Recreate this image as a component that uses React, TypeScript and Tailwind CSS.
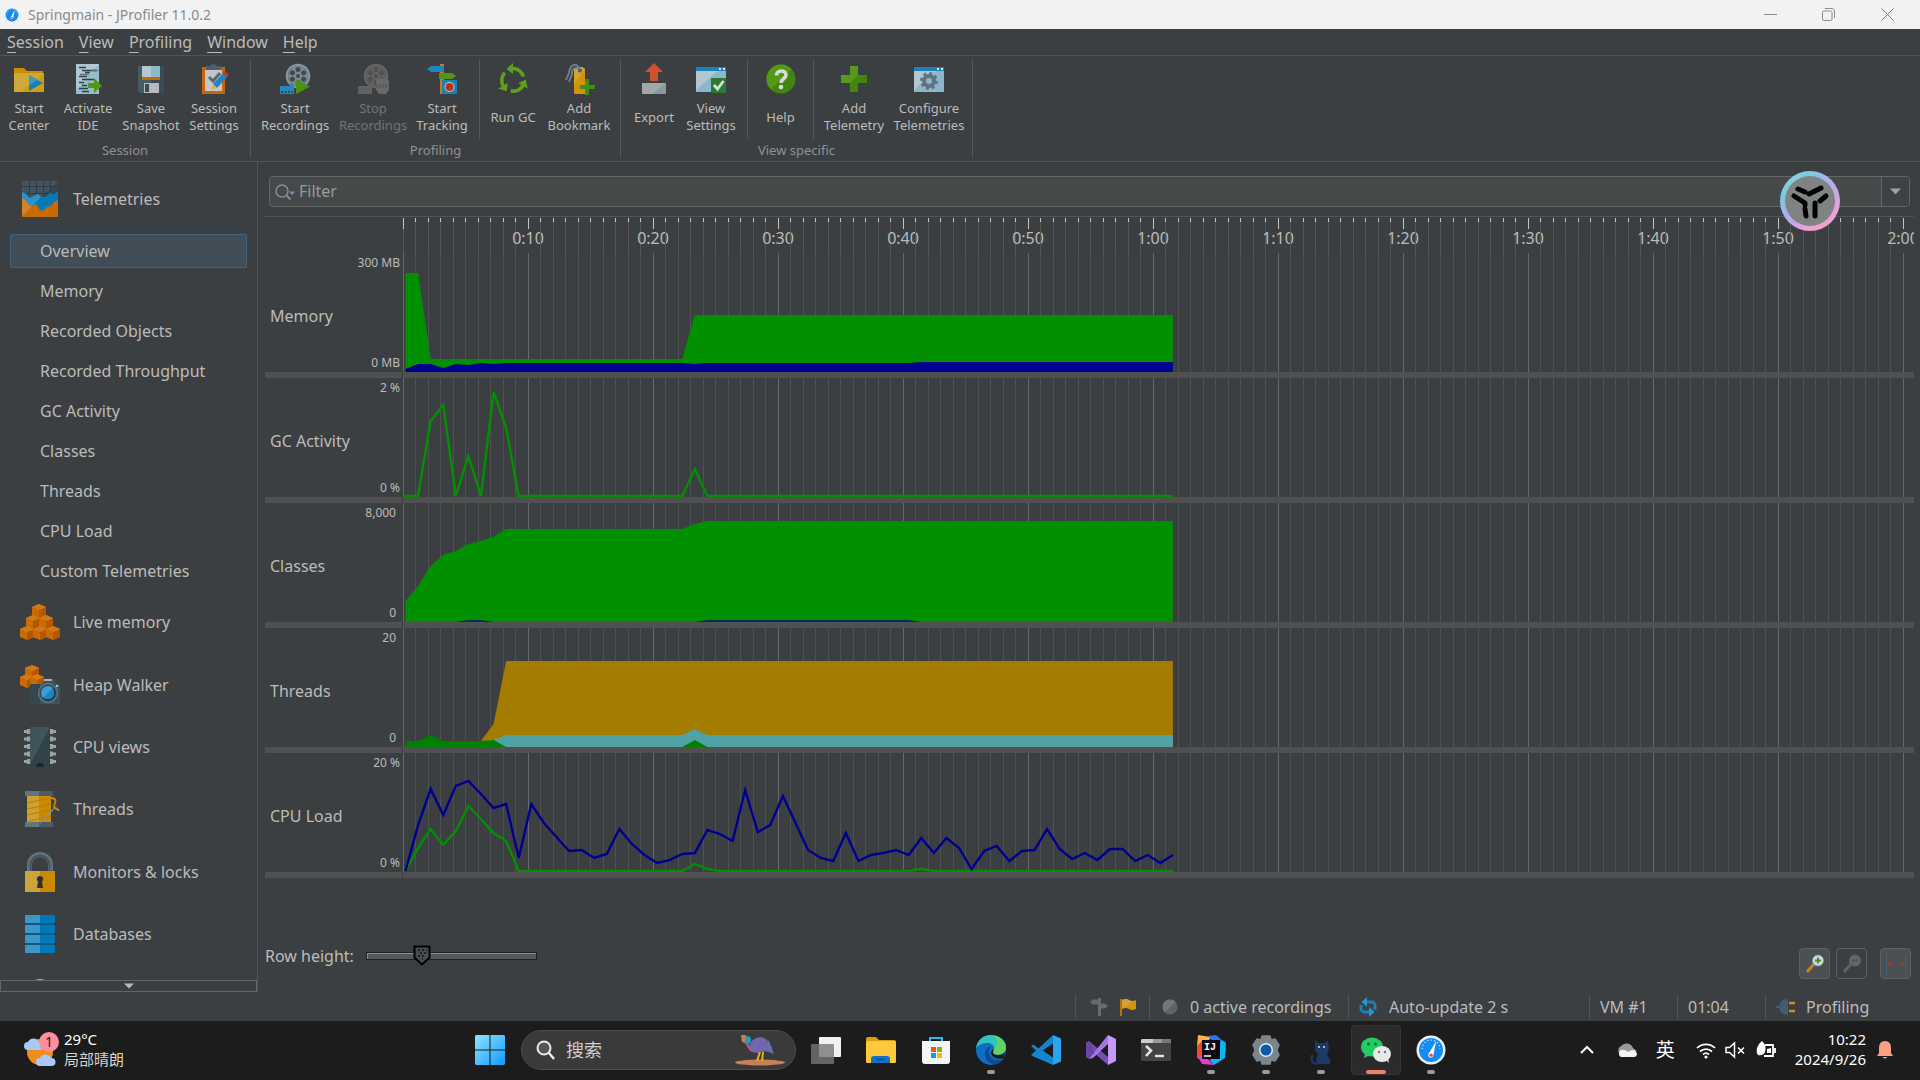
import React, { useState } from 'react';

type Point = [number, number];

const STEP = 12.58;
const BASE = 119;
const LAST = 61;

const px = (k: number) => 2.5 + k * STEP;
const line = (points: Point[]) => points.map(([k, y]) => `${px(k)},${y}`).join(' ');
const area = (points: Point[]) => {
  const first = points[0][0];
  const last = points[points.length - 1][0];
  return `${px(first)},${BASE} ${line(points)} ${px(last)},${BASE}`;
};

const memoryTotal: Point[] = [[0, 20], [1, 20], [2, 106], [22, 106], [23, 62], [LAST, 62]];
const memoryUsed: Point[] = [
  [0, 116], [1, 111], [2, 111], [3, 115], [4, 111], [5, 112], [6, 110], [7, 111], [8, 110],
  [22, 110], [23, 111], [24, 110], [40, 110], [41, 109], [LAST, 109],
];
const gcActivity: Point[] = [
  [0, 118], [1, 118], [2, 43], [3, 27], [4, 118], [5, 78], [6, 118], [7, 14], [8, 50], [9, 118],
  [22, 118], [23, 91], [24, 118], [LAST, 118],
];
const classesTotal: Point[] = [
  [0, 98], [1, 83], [2, 63], [3, 52], [4, 48], [5, 41], [6, 38], [7, 34], [8, 26], [22, 26],
  [23, 21], [24, 18], [LAST, 18],
];
const classesCpu: Point[] = [
  [0, 119], [4, 119], [5, 117], [6, 117], [7, 119], [23, 119], [24, 117], [40, 117], [41, 119], [LAST, 119],
];
const threadsWaiting: Point[] = [[6, 113], [7, 96], [8, 33], [LAST, 33]];
const threadsNet: Point[] = [[7, 112], [8, 107], [22, 107], [23, 101], [24, 107], [LAST, 107]];
const threadsRunnable: Point[] = [
  [0, 113], [1, 113], [2, 107], [3, 113], [6, 113], [7, 112], [8, 119], [22, 119], [23, 112], [24, 119],
];
const cpuProcess: Point[] = [
  118, 72, 36, 62, 33, 28, 41, 55, 51, 105, 51, 70, 84, 98, 97, 105, 101, 76, 91, 102, 110, 107, 101,
  100, 77, 81, 88, 37, 79, 72, 43, 70, 97, 105, 108, 80, 108, 102, 100, 97, 102, 85, 100, 85, 95, 116,
  98, 93, 108, 98, 97, 76, 96, 106, 100, 107, 96, 96, 108, 102, 110, 102,
].map((y, k) => [k, y]);
const cpuSystem: Point[] = [
  [0, 118], [1, 95], [2, 76], [3, 92], [4, 78], [5, 53], [6, 66], [7, 80], [8, 88], [9, 118],
  [22, 118], [23, 111], [24, 116], [25, 118], [40, 118], [41, 116], [42, 118], [LAST, 118],
];

const rows = [
  {
    name: 'Memory', top: '300 MB', bottom: '0 MB', pad: 'pr-0.5',
    plot: (
      <>
        <polygon points={area(memoryTotal)} fill="#009000" />
        <polygon points={area(memoryUsed)} fill="#000090" />
      </>
    ),
  },
  {
    name: 'GC Activity', top: '2 %', bottom: '0 %', pad: 'pr-0.5',
    plot: <polyline points={`0,118 ${line(gcActivity)}`} fill="none" stroke="#009000" strokeWidth="2.400" />,
  },
  {
    name: 'Classes', top: '8,000', bottom: '0', pad: 'pr-1.5',
    plot: (
      <>
        <polygon points={area(classesTotal)} fill="#009000" />
        <polygon points={area(classesCpu)} fill="#003058" />
      </>
    ),
  },
  {
    name: 'Threads', top: '20', bottom: '0', pad: 'pr-1.5',
    plot: (
      <>
        <polygon points={area(threadsWaiting)} fill="#a37c00" />
        <polygon points={area(threadsNet)} fill="#51a2a4" />
        <polygon points={area(threadsRunnable)} fill="#008000" />
      </>
    ),
  },
  {
    name: 'CPU Load', top: '20 %', bottom: '0 %', pad: 'pr-0.5',
    plot: (
      <>
        <polyline points={line(cpuSystem)} fill="none" stroke="#009000" strokeWidth="2.400" />
        <polyline points={line(cpuProcess)} fill="none" stroke="#000090" strokeWidth="2.400" />
      </>
    ),
  },
];

const seconds = Array.from({ length: 121 }, (_, k) => k);

function Svg({ size = 32, box, children, className }: {
  size?: number; box?: string; children: React.ReactNode; className?: string;
}) {
  return (
    <svg width={size} height={size} viewBox={box ?? `0 0 ${size} ${size}`} className={`shrink-0 ${className ?? ''}`} aria-hidden="true">
      {children}
    </svg>
  );
}

function GaugeIcon({ size }: { size: number }) {
  return (
    <Svg size={size} box="0 0 32 32">
      <circle cx="16" cy="16" r="15.5" fill="#e8eef4" />
      <circle cx="16" cy="16" r="12.8" fill="#128cf5" />
      <path d="M6.5 15a9.5 9.5 0 0 1 19 0" fill="none" stroke="#bfe0ff" strokeWidth="1.4" strokeDasharray="1.4 2.2" />
      <path d="M21.5 6.5 18.6 21a2.8 2.8 0 1 1-4.8-1.6z" fill="#fff" />
      <circle cx="16" cy="21.5" r="1.8" fill="#f04a2c" />
    </Svg>
  );
}

/* Toolbar icons */
const StartCenterIcon = () => (
  <Svg>
    <path d="M1 5h10l3 3h16v5H1z" fill="#cc8e00" />
    <path d="M1 10h30v19H1z" fill="#cfa83a" />
    <path d="M31 10v19H8z" fill="#cda012" />
    <path d="M16 12v16l14-8z" fill="#1a7fb9" />
    <path d="M16 12v10l9-5z" fill="#3f98c4" />
  </Svg>
);
const ActivateIdeIcon = () => (
  <Svg>
    <path d="M4 1h23v30H4z" fill="#94bccd" />
    <path d="M4 1h23L4 27z" fill="#b0c8d2" />
    <g stroke="#2e4048" strokeWidth="1.5">
      <path d="M7 4.5h7M10 7.5h14M13 9.500h5M7 13.500h8M10 16.500h12M7 19.500h5M10 22.500h5M7 25.500h9M10 28.500h7" />
      <path d="M19 7.500h7M8 11.500h9" stroke="#5c7078" />
    </g>
    <path d="M16 20h6v-5l8 8-8 7v-5h-6z" fill="#54961a" />
  </Svg>
);
const SaveIcon = () => (
  <Svg>
    <path d="M3 3h26v27H5l-2-2z" fill="#3a4c57" />
    <path d="M3 3h13v27H5l-2-2z" fill="#465c68" />
    <path d="M7 3h18v11H7z" fill="#8fb9cb" />
    <path d="M7 3h9v11H7z" fill="#b4c8d0" />
    <path d="M7 14h18v3H7z" fill="#c46a00" />
    <path d="M9 20h15v10H9z" fill="#b8babb" />
    <path d="M10 21h4v8h-4z" fill="#3a4c57" />
  </Svg>
);
const SessionSettingsIcon = () => (
  <Svg>
    <path d="M4 4h23v27H4z" fill="#c8650c" />
    <path d="M7 7h17v21H7z" fill="#c4c6c7" />
    <path d="M8 7V3h4q3.500-4 7 0h4v4z" fill="#4e606b" />
    <path d="m11 14 4 4 7-8" fill="none" stroke="#5b6a73" strokeWidth="3" />
    <path d="m15 21 10-11 4 4-10 11z" fill="#1f86c4" />
    <path d="m25 10 2-2 4 4-2 2z" fill="#c23b1f" />
    <path d="m15 21 4 4-6 2z" fill="#d9b15a" />
  </Svg>
);
function Reel({ main, spoke, hole }: { main: string; spoke: string; hole: string }) {
  return (
    <>
      <circle cx="19" cy="13" r="11.200" fill="none" stroke={main} strokeWidth="2.200" />
      <circle cx="19" cy="13" r="10" fill={spoke} />
      {[0, 60, 120, 180, 240, 300].map((a) => (
        <circle key={a} cx="19" cy="6.600" r="2.500" fill={hole} transform={`rotate(${a} 19 13)`} />
      ))}
      <circle cx="19" cy="13" r="2" fill={hole} />
    </>
  );
}
const StartRecordingsIcon = () => (
  <Svg>
    <Reel main="#8795a0" spoke="#7c8b96" hole="#3c4a52" />
    <path d="M1 23h10v-2h4v10H1z" fill="#2a86b8" />
    <path d="M2 29h12" stroke="#0e4f78" strokeWidth="2" strokeDasharray="2 1.500" />
    <path d="M17 16v15l14-7.500z" fill="#4b9413" />
  </Svg>
);
const StopRecordingsIcon = () => (
  <Svg>
    <Reel main="#646464" spoke="#626262" hole="#4e5051" />
    <path d="M1 23h10v-2h4v10H1z" fill="#606162" />
    <path d="m19 17 3-2h7l3 3v9l-3 4h-7l-3-4z" fill="#686868" />
    <path d="M19 23h12" stroke="#5a5b5b" strokeWidth="4" strokeDasharray="2 1" />
  </Svg>
);
const TrackingIcon = () => (
  <Svg>
    <path d="M14 1h4v30h-4z" fill="#c57a1c" />
    <path d="m1 6 4-3h13v6H5z" fill="#1f86bd" />
    <path d="m30 13-4-3H13v6h13z" fill="#54931c" />
    <path d="M16 17h15v14H16z" fill="#1d7fb8" />
    <circle cx="23.500" cy="24" r="5" fill="#b9cdd6" />
    <circle cx="23.500" cy="24" r="4" fill="#b8340f" />
  </Svg>
);
const RunGcIcon = () => (
  <Svg>
    <g fill="none" stroke="#5da01e" strokeWidth="3.600">
      {[0, 120, 240].map((a) => (
        <g key={a} transform={`rotate(${a} 16 17)`}>
          <path d="M15 5.500a11.500 11.500 0 0 1 11.500 8" />
          <path d="M16 0v11L9.500 6z" fill="#5da01e" stroke="none" />
        </g>
      ))}
    </g>
  </Svg>
);
const BookmarkIcon = () => (
  <Svg>
    <path d="M11 6l3-2h5l3 2v25H11z" fill="#d4920a" />
    <path d="M11 6l3-2h5l3 2L11 22z" fill="#cfa52c" />
    <path d="M17 7C14-1 7 1 6 10l-3 7M17 7C12 3 9 5 9 11l-3 8" fill="none" stroke="#71828e" strokeWidth="1.800" />
    <circle cx="17" cy="7.500" r="2" fill="#4e5f6a" />
    <path d="M22 16h4v6h6v4h-6v6h-4v-6h-5v-4h5z" fill="#3f8d16" />
  </Svg>
);
const ExportIcon = () => (
  <Svg>
    <path d="m16 0 9 9h-5v9h-8V9H7z" fill="#cc5230" />
    <path d="M4 20h24v11H4z" fill="#8d979c" />
    <path d="M4 20h24L14 31H4z" fill="#a2a8aa" />
  </Svg>
);
function WindowBase() {
  return (
    <>
      <path d="M1 4h30v25H1z" fill="#8cb6cb" />
      <path d="M1 4h26L1 27z" fill="#b4c7d0" />
      <path d="M1 4h30v4H1z" fill="#1b83b9" />
      <path d="M24 6h2M28 6h2" stroke="#d5e6ee" strokeWidth="2" />
    </>
  );
}
const ViewSettingsIcon = () => (
  <Svg>
    <WindowBase />
    <path d="M16 15h15v15H16z" fill="#2b7a31" />
    <path d="m19 22 3.500 4 6-8" fill="none" stroke="#d8e0d8" strokeWidth="2.800" />
  </Svg>
);
const HelpIcon = () => (
  <Svg>
    <circle cx="16" cy="16" r="14.500" fill="#43850f" />
    <path d="M26.500 6A14.500 14.500 0 1 0 6 26.500z" fill="#529917" />
    <path d="M11.500 12.500c0-6 9.500-6 9.500-.5 0 4-5 3.500-5 8" fill="none" stroke="#d6dcd2" strokeWidth="3.600" />
    <circle cx="16" cy="24" r="2.300" fill="#d6dcd2" />
  </Svg>
);
const AddTelemetryIcon = () => (
  <Svg>
    <path d="M12 3h8v9h9v8h-9v9h-8v-9H3v-8h9z" fill="#43850f" />
    <path d="M12 3h8v9L12 20H3v-8h9z" fill="#57991f" />
  </Svg>
);
const ConfigureIcon = () => (
  <Svg>
    <WindowBase />
    <circle cx="16" cy="18" r="5" fill="none" stroke="#5e7481" strokeWidth="4" />
    <circle cx="16" cy="18" r="7.500" fill="none" stroke="#5e7481" strokeWidth="3" strokeDasharray="3 2.890" />
  </Svg>
);

/* Sidebar icons */
const TelemetriesIcon = () => (
  <Svg size={36}>
    <rect width="36" height="36" rx="1" fill="#42555f" />
    <path d="M36 0v20H16z" fill="#34464f" />
    <path d="M7.500 0v14M14.500 0v14M21.500 0v14M28.500 0v14M0 5.500h36M0 12.500h36" stroke="#2d3c44" />
    <path d="m0 11 4 2 3 4 3-1 6-3 3 3h4l5-4 4 1 4-3v26H0z" fill="#0779b6" />
    <path d="m0 11 4 2 3 4 3-1 6-3 3 3L0 36z" fill="#2a93cc" />
    <path d="m0 17 4 3 3 4 3 1 4-2 4 6 3 1 4-4 4-1 3-4 4-2v18H0z" fill="#c66c00" />
    <path d="m0 17 4 3 3 4 3 1L0 35z" fill="#cd862c" />
  </Svg>
);
function Cube({ x, y }: { x: number; y: number }) {
  return (
    <g transform={`translate(${x} ${y})`}>
      <path d="m7 0 7 3v8l-7 3-7-3V3z" fill="#c96b00" />
      <path d="m14 3-7 3v8l7-3z" fill="#b85600" />
      <path d="m7 0 7 3-7 3-7-3z" fill="#d17a15" />
    </g>
  );
}
const LiveMemoryIcon = () => (
  <Svg size={40}>
    <Cube x={12} y={2} />
    <Cube x={6} y={13} /><Cube x={19} y={13} />
    <Cube x={0} y={24} /><Cube x={13} y={24} /><Cube x={26} y={24} />
  </Svg>
);
const HeapWalkerIcon = () => (
  <Svg size={40}>
    <Cube x={5} y={0} /><Cube x={0} y={9} /><Cube x={10} y={9} />
    <path d="M10 19h12l3-5h9l3 5h3v20H10z" fill="#3d525e" />
    <path d="M10 19h10v20H10z" fill="#354850" />
    <path d="M24 15h8" stroke="#aab4b9" strokeWidth="2" />
    <circle cx="28" cy="28" r="9.500" fill="#3f5663" stroke="#71838d" />
    <circle cx="28" cy="28" r="7" fill="#1c86c2" stroke="#111f28" />
    <path d="M23 33a7 7 0 0 1 10-10z" fill="#3ca0d4" />
    <circle cx="37" cy="21" r="1.200" fill="#b5bdc0" />
  </Svg>
);
const CpuIcon = () => (
  <Svg size={40}>
    {[2, 9.500, 17, 24.500, 32].map((y) => (
      <path key={y} d={`M4 ${y + 1}h3v-1h4v5H7v-1H4zM36 ${y + 1}h-3v-1h-4v5h4v-1h3z`} fill="#9aa2a5" />
    ))}
    <path d="M10 0h20v40H10z" fill="#314249" />
    <path d="M10 0h20L10 38z" fill="#41545e" />
    <path d="M16 40a4 4 0 0 1 8 0z" fill="#1d282c" />
  </Svg>
);
const SpoolIcon = () => (
  <Svg size={40}>
    <path d="M5 2h28v5H5zM5 33h28v5H5z" fill="#4b5c66" />
    <path d="M5 2h14v5H5zM5 33h14v5H5z" fill="#63747e" />
    <path d="M7 7h24v26H7z" fill="#cb8a00" />
    <path d="M7 7h12v26H7z" fill="#cfa030" />
    <path d="m7 14 24-5M7 20l24-5M7 26l24-5M9 32l22-5" stroke="#b87c0a" />
    <path d="M31 9c7 0 4 5 3 8s4 2 5 5" fill="none" stroke="#c88a0c" strokeWidth="1.800" />
    <path d="M38 16 16 39l14-17z" fill="#8c969b" />
  </Svg>
);
const LockIcon = () => (
  <Svg size={40}>
    <path d="M9.500 20v-7a10.500 10.500 0 0 1 21 0v7" fill="none" stroke="#5f727e" strokeWidth="5" />
    <path d="M10.500 20v-7a9.500 9.500 0 0 1 19 0v7" fill="none" stroke="#43555f" strokeWidth="2" />
    <path d="M5 19h30v21H5z" fill="#cb8a00" />
    <path d="M5 19h15v21H5z" fill="#cda43c" />
    <path d="M20 24a3 3 0 0 1 2 5.400L23 36h-6l1-6.600A3 3 0 0 1 20 24z" fill="#2c3234" />
  </Svg>
);
const DatabaseIcon = () => (
  <Svg size={40}>
    <path d="M6 2h28v36H6z" fill="#0b5a87" />
    {[1, 11, 21, 31].map((y) => (
      <g key={y}>
        <rect x="5" y={y} width="30" height="8" rx="1" fill="#0079b8" />
        <rect x="5" y={y} width="15" height="8" rx="1" fill="#3c97c6" />
      </g>
    ))}
  </Svg>
);

interface Tool {
  label: string[];
  icon: React.ReactNode;
  width: string;
  disabled?: boolean;
}

function ToolButton({ label, icon, width, disabled }: Tool) {
  return (
    <button disabled={disabled} className={`${width} flex flex-col items-center shrink-0 pt-[3px] ${disabled ? 'text-[#727476]' : ''}`}>
      {icon}
      <span className="h-[34px] mt-[5px] flex flex-col justify-center text-[13px] leading-[17px] whitespace-nowrap">
        {label.map((text) => <span key={text}>{text}</span>)}
      </span>
    </button>
  );
}

const Divider = () => <div className="w-px h-[79px] bg-[#555859] shrink-0" />;

function ToolGroup({ title, children }: { title: string; children: React.ReactNode }) {
  return (
    <section className="border-r border-[#555859] flex flex-col justify-between">
      <div className="flex">{children}</div>
      <h2 className="text-center text-[13px] leading-4 text-[#8f9193]">{title}</h2>
    </section>
  );
}

function Toolbar() {
  return (
    <div className="h-[107px] flex pt-1 pb-[3px] border-y border-[#515456]">
      <ToolGroup title="Session">
        <div className="flex pr-1.5">
          <ToolButton width="w-[58px]" label={['Start', 'Center']} icon={<StartCenterIcon />} />
          <ToolButton width="w-[60px]" label={['Activate', 'IDE']} icon={<ActivateIdeIcon />} />
          <ToolButton width="w-[66px]" label={['Save', 'Snapshot']} icon={<SaveIcon />} />
          <ToolButton width="w-[60px]" label={['Session', 'Settings']} icon={<SessionSettingsIcon />} />
        </div>
      </ToolGroup>
      <ToolGroup title="Profiling">
        <div className="flex pl-1 pr-1.5">
          <ToolButton width="w-20" label={['Start', 'Recordings']} icon={<StartRecordingsIcon />} />
          <ToolButton width="w-[76px]" label={['Stop', 'Recordings']} icon={<StopRecordingsIcon />} disabled />
          <ToolButton width="w-[62px]" label={['Start', 'Tracking']} icon={<TrackingIcon />} />
        </div>
        <Divider />
        <div className="flex px-1">
          <ToolButton width="w-[58px]" label={['Run GC']} icon={<RunGcIcon />} />
          <ToolButton width="w-[74px]" label={['Add', 'Bookmark']} icon={<BookmarkIcon />} />
        </div>
      </ToolGroup>
      <ToolGroup title="View specific">
        <div className="flex pl-1 pr-2">
          <ToolButton width="w-[58px]" label={['Export']} icon={<ExportIcon />} />
          <ToolButton width="w-[56px]" label={['View', 'Settings']} icon={<ViewSettingsIcon />} />
        </div>
        <Divider />
        <ToolButton width="w-[65px]" label={['Help']} icon={<HelpIcon />} />
        <Divider />
        <div className="flex px-1">
          <ToolButton width="w-[72px]" label={['Add', 'Telemetry']} icon={<AddTelemetryIcon />} />
          <ToolButton width="w-[78px]" label={['Configure', 'Telemetries']} icon={<ConfigureIcon />} />
        </div>
      </ToolGroup>
    </div>
  );
}

const views = [
  'Overview', 'Memory', 'Recorded Objects', 'Recorded Throughput', 'GC Activity',
  'Classes', 'Threads', 'CPU Load', 'Custom Telemetries',
];

const sections = [
  { name: 'Live memory', icon: <LiveMemoryIcon /> },
  { name: 'Heap Walker', icon: <HeapWalkerIcon /> },
  { name: 'CPU views', icon: <CpuIcon /> },
  { name: 'Threads', icon: <SpoolIcon /> },
  { name: 'Monitors & locks', icon: <LockIcon /> },
  { name: 'Databases', icon: <DatabaseIcon /> },
];

function Sidebar() {
  return (
    <aside className="w-[258px] shrink-0 border-r border-[#515456] flex flex-col mb-[3px]">
      <div className="h-0 grow overflow-hidden pt-1">
        <button className="h-[66px] mb-0.5 w-full pl-[22px] flex items-center gap-[15px]">
          <TelemetriesIcon />
          Telemetries
        </button>
        <nav className="flex flex-col gap-1.5 px-2.5">
          {views.map((view, i) => (
            <button
              key={view}
              className={`h-[34px] pl-[29px] text-left border rounded-xs ${
                i === 0 ? 'bg-[#414d57] border-[#43647e]' : 'border-transparent'
              }`}
            >
              {view}
            </button>
          ))}
        </nav>
        <div className="grid grid-rows-7 h-[437px] mt-[3px]">
          {sections.map(({ name, icon }) => (
            <button key={name} className="pl-5 flex items-center gap-[13px] text-left">
              {icon}
              {name}
            </button>
          ))}
          <div className="pl-5 pt-[13px]">
            <Svg size={40}><circle cx="20" cy="12" r="12" fill="#a5abad" /></Svg>
          </div>
        </div>
      </div>
      <button className="h-3 border border-[#636567] flex items-center justify-center" aria-label="Scroll down">
        <Svg size={10} box="0 0 10 5"><path d="M0 0h10L5 5z" fill="#bbb" /></Svg>
      </button>
    </aside>
  );
}

function TimeAxis() {
  return (
    <div className="flex pl-[138px]">
      <svg className="grow w-0 h-9 overflow-hidden">
        {seconds.map((k) => {
          const x = Math.floor(k * 12.5);
          const major = k % 10 === 0;
          return (
            <g key={k}>
              {(!major || k === 0) && <rect x={x} y="5" width="1" height="31" fill="#535556" />}
              <rect x={x} y="1" width="1" height={major ? 11 : 4} fill="#c4c4c4" />
              {major && k > 0 && (
                <text x={x} y="27" textAnchor="middle" fontSize="16" fill="#bbb">
                  {`${Math.floor(k / 60)}:${String(k % 60).padStart(2, '0')}`}
                </text>
              )}
            </g>
          );
        })}
      </svg>
    </div>
  );
}

function TelemetryRow({ name, top, bottom, pad, plot }: (typeof rows)[number]) {
  return (
    <div className="flex gap-px">
      <div className="w-[137px] h-[125px] shrink-0 border-b-6 border-[#505050] flex justify-between">
        <h3 className="self-center pl-[5px] pt-1.5">{name}</h3>
        <div className={`flex flex-col justify-between text-right text-xs leading-[18px] pt-px ${pad}`}>
          <span>{top}</span>
          <span>{bottom}</span>
        </div>
      </div>
      <svg className="grow w-0 h-[125px] border-b-6 border-[#505050] overflow-hidden" role="img" aria-label={name}>
        {seconds.map((k) => (
          <rect key={k} x={Math.floor(k * 12.5)} y="0" width="1" height="119" fill={k % 10 === 0 ? '#66686a' : '#4f5152'} />
        ))}
        {plot}
      </svg>
    </div>
  );
}

function RowHeight() {
  const [value, setValue] = useState(31);
  return (
    <div className="flex items-center gap-3">
      <label htmlFor="row-height">Row height:</label>
      <div className="relative w-[171px] h-6 flex items-center">
        <input
          id="row-height"
          type="range"
          value={value}
          onChange={(e) => setValue(Number(e.target.value))}
          className="appearance-none w-full h-2 border border-[#1f2122] bg-[#55585a] shadow-[inset_1px_1px_0_#8b8d8e] [&::-webkit-slider-thumb]:appearance-none [&::-webkit-slider-thumb]:w-[18px] [&::-webkit-slider-thumb]:h-5"
        />
        <svg width="18" height="22" viewBox="0 0 18 22" className="absolute top-0 pointer-events-none" style={{ left: `calc(${value}% - ${value * 0.18}px)` }}>
          <path d="M1.500 2.500h15v11l-7.500 7-7.500-7z" fill="#4a4d4f" stroke="#000" strokeWidth="2" />
          <path d="M5 6h2M9 6h2M13 6h1M7 9h2M11 9h2M5 12h2M9 12h2M9 15h1" stroke="#111" strokeWidth="1.500" />
        </svg>
      </div>
    </div>
  );
}

const zoomButton = 'w-[31px] h-[31px] border border-[#5e6163] rounded flex items-center justify-center';

function Magnifier({ ring, handle, sign, fill }: { ring: string; handle: string; sign: React.ReactNode; fill: string }) {
  return (
    <Svg size={20}>
      <path d="m2 18 7-8" stroke={handle} strokeWidth="3" />
      <circle cx="13" cy="6.500" r="5.500" fill={fill} stroke={ring} />
      {sign}
    </Svg>
  );
}

function Telemetries() {
  return (
    <main className="grow min-w-0 flex flex-col pl-[7px] pr-1.5 pt-[14px]">
      <div className="mx-1 h-[31px] flex items-center border border-[#646667] rounded bg-[#45494a] overflow-hidden">
        <Svg size={22} className="ml-1">
          <circle cx="8" cy="10" r="6" fill="none" stroke="#7f8f9c" strokeWidth="1.500" />
          <path d="m12.500 14.500 4 4" stroke="#7f8f9c" strokeWidth="2" />
          <path d="M15 10.500h6L18 14z" fill="#7f8f9c" />
        </Svg>
        <input
          aria-label="Filter"
          placeholder="Filter"
          className="grow min-w-0 h-full pl-[3px] pb-0.5 bg-transparent outline-none placeholder:text-[#999b9c]"
        />
        <button aria-label="Filter options" className="w-[28px] h-full border-l border-[#646667] bg-[#3f4244] flex items-center justify-center">
          <Svg size={11} box="0 0 11 6"><path d="M0 0h11L5.500 6z" fill="#a0a2a3" /></Svg>
        </button>
      </div>
      <div className="mt-[9px] border-t border-[#515456]">
        <TimeAxis />
        {rows.map((row) => <TelemetryRow key={row.name} {...row} />)}
      </div>
      <div className="grow flex items-end justify-between pb-4">
        <div className="pb-[11px]"><RowHeight /></div>
        <div className="flex pr-[3px]">
          <button aria-label="Zoom in" className={`${zoomButton} bg-[#4c5052] mr-1.5`}>
            <Magnifier ring="#7c96a6" handle="#c97f1c" fill="#d3dde0" sign={<path d="M13 3.500v6M10 6.500h6" stroke="#4c8f1c" strokeWidth="2" />} />
          </button>
          <button aria-label="Zoom out" className={`${zoomButton} mr-[13px]`}>
            <Magnifier ring="#636567" handle="#606264" fill="#636567" sign={<path d="M10 6.500h6" stroke="#505254" strokeWidth="2" />} />
          </button>
          <button aria-label="Fit window" className={`${zoomButton} bg-[#4c5052]`}>
            <Svg size={20}>
              <path d="M.5 1v18M19.500 1v18" stroke="#3f6478" />
              <path d="m1 10 4-2v4zM19 10l-4-2v4z" fill="#b5371a" />
            </Svg>
          </button>
        </div>
      </div>
    </main>
  );
}

function StatusBar() {
  const cell = 'h-full border-l border-[#515456] flex items-center';
  return (
    <footer className="h-[26px] pb-0.5 flex justify-end items-center">
      <div className={`${cell} w-[74px] pl-[13px] gap-2.5`}>
        <Svg size={20}>
          <path d="M9 1h3v18H9z" fill="#686a6c" />
          <path d="m1 5 3-2.500h8v5H4zM19 9l-3-2.500H9v5h7z" fill="#686a6c" />
        </Svg>
        <Svg size={18}>
          <path d="M2 1v17" stroke="#b86e10" strokeWidth="2" />
          <path d="M3 2q4-2 7 0t7 0v9q-4 2-7 0t-7 0z" fill="#cf9410" />
          <path d="M3 2q4-2 7 0t5 0L3 11z" fill="#cfa334" />
        </Svg>
      </div>
      <div className={`${cell} w-[199px] pl-3 gap-3`}>
        <Svg size={16}>
          <circle cx="8" cy="8" r="7.500" fill="#616365" />
          <path d="M13.500 2.700A7.500 7.500 0 1 0 2.700 13.300z" fill="#747678" />
        </Svg>
        <span>0 active recordings</span>
      </div>
      <div className={`${cell} w-[241px] pl-[9px] gap-[11px]`}>
        <Svg size={20}>
          <path d="M6 5h7a3.500 3.500 0 0 1 4 4v4M14 15H7a3.500 3.500 0 0 1-4-4V8" fill="none" stroke="#1a7fb5" strokeWidth="3" />
          <path d="M9 0v10L3.500 5zM11 10v10l5.500-5z" fill="#2a93c8" />
        </Svg>
        <span>Auto-update 2 s</span>
      </div>
      <div className={`${cell} w-[88px] pl-2.5`}>VM #1</div>
      <div className={`${cell} w-[88px] pl-2.5`}>01:04</div>
      <div className={`${cell} w-[155px] pl-2.5 gap-2.5`}>
        <Svg size={20}>
          <path d="M0 10h4" stroke="#3f5e70" strokeWidth="2" />
          <path d="M3 10q1-8 9-8v16q-8 0-9-8z" fill="#3f5e70" />
          <path d="M13 6h6M13 14h6" stroke="#c2931c" strokeWidth="2.500" />
        </Svg>
        <span>Profiling</span>
      </div>
    </footer>
  );
}

/* Taskbar icons, 30px each */
const apps: { name: string; state?: 'open' | 'active'; icon: React.ReactNode }[] = [
  {
    name: 'Task view',
    icon: (
      <>
        <rect x="8" y="2" width="22" height="20" rx="1" fill="#f1f1f1" />
        <rect x="0" y="9" width="23" height="20" rx="1" fill="#777" fillOpacity="0.8" />
      </>
    ),
  },
  {
    name: 'Explorer',
    icon: (
      <>
        <path d="M0 4q0-2 2-2h8l3 3h15q2 0 2 2v6H0z" fill="#dd9d10" />
        <rect y="6" width="30" height="22" rx="1.500" fill="#fcc93c" />
        <path d="M5 28v-4q0-3 3-3h13q3 0 3 3v4z" fill="#1272c4" />
        <path d="M10 24.500h9" stroke="#0a4d8f" strokeWidth="1.500" />
      </>
    ),
  },
  {
    name: 'Store',
    icon: (
      <>
        <path d="M9 8V3h12v5" fill="none" stroke="#35b5ee" strokeWidth="2" />
        <path d="M1 6h28v20q0 3-3 3H4q-3 0-3-3z" fill="#f4f5f6" />
        <path d="M10 12h5v5h-5z" fill="#f05022" /><path d="M16 12h5v5h-5z" fill="#7db700" />
        <path d="M10 18h5v5h-5z" fill="#00a2ea" /><path d="M16 18h5v5h-5z" fill="#fdb900" />
      </>
    ),
  },
  {
    name: 'Edge',
    state: 'open',
    icon: (
      <>
        <circle cx="15" cy="15" r="15" fill="#0e6dc4" />
        <path d="M0 14C1 5 7 0 15 0c9 0 15 6 15 12 0 5-4 8-8 8-3 0-5-1-5-3 0-1 1-2 1-4 0-3-3-5-7-5C5 8 1 11 0 14z" fill="#34c1c2" />
        <path d="M18 .4C25 2 30 7 30 12c0 5-4 8-8 8-3 0-5-1-5-3 0-1 1-2 1-4 4-2 4-8 0-12.600z" fill="#5fd465" />
        <path d="M10 15c-3 6 1 14 9 14.500 4-.5 7-3 9-6-8 4-16 0-15-8 0-1 1-3 2-4-2 0-4 1-5 3.500z" fill="#0d4c94" />
        <path d="M17 17c0 2 2 3 5 3 3 0 5-1 7-3l-1 6c-5 2-12 0-13-5 0-2 1-3 3-4z" fill="#1c1c1c" />
      </>
    ),
  },
  {
    name: 'Visual Studio Code',
    icon: (
      <>
        <path d="M22 0 7.500 13.500 2.500 9.500 0 11l5 4.500L0 20l2.500 1.500L22 30z" fill="#1285cf" />
        <path d="M22 8.500 11.500 15.500 22 22.500z" fill="#1c1c1c" />
        <path d="m22 0 8 3.500v23L22 30z" fill="#2ba4ee" />
      </>
    ),
  },
  {
    name: 'Visual Studio',
    icon: (
      <>
        <path d="m0 8 3-2 19 16v8L0 11z" fill="#7450b4" />
        <path d="M0 8l3-2 4 3.500v11L3 24l-3-2z" fill="#6a45a5" />
        <path d="M3 24 22 0v9L7 23z" fill="#a277e6" />
        <path d="m22 0 8 4v22l-8 4z" fill="#c39af6" />
      </>
    ),
  },
  {
    name: 'Terminal',
    icon: (
      <>
        <rect y="4" width="30" height="22" rx="1.500" fill="#444" />
        <path d="M1 4h11v4H0V5z" fill="#ccc" /><path d="M12 4h9v4h-9z" fill="#9a9a9a" /><path d="M21 4h9v4h-9z" fill="#777" />
        <path d="m5 11 5 4.500-5 5.500" fill="none" stroke="#e4e4e4" strokeWidth="2.600" />
        <path d="M14 21h9" stroke="#e4e4e4" strokeWidth="2.400" />
      </>
    ),
  },
  {
    name: 'IntelliJ IDEA',
    state: 'open',
    icon: (
      <>
        <path d="m2 0 13 2-9 14-5-4z" fill="#fcb347" /><path d="m1 11 6-6 8 18-8 3-6-3z" fill="#f2452f" />
        <path d="m12 1 8-1 8 7-2 10z" fill="#2876f0" /><path d="m26 5 4 3-1 15-11 7-4-5z" fill="#12b5ef" />
        <path d="m1 20 9 2 8 8-12-1z" fill="#e83ccc" />
        <path d="M6 5h18v19H6z" fill="#100810" />
        <text x="8" y="15" fontSize="10" fontWeight="700" fill="#fff" fontFamily="Liberation Mono, monospace">IJ</text>
        <path d="M8 21h7" stroke="#fff" strokeWidth="1.500" />
      </>
    ),
  },
  {
    name: 'Settings',
    state: 'open',
    icon: (
      <>
        <path d="m11 1 8 0 1 4 4-1 4 6-2 5 2 5-4 6-4-1-1 4h-8l-1-4-4 1-4-6 2-5-2-5 4-6 4 1z" fill="#7b858e" stroke="#7b858e" strokeWidth="1.500" strokeLinejoin="round" />
        <circle cx="15" cy="15" r="7" fill="#e6eaee" />
        <circle cx="15" cy="15" r="5.500" fill="#0f5aa8" />
      </>
    ),
  },
  {
    name: 'Clash',
    state: 'open',
    icon: (
      <>
        <path d="m9 5 3 3h7l3-3 1 9-2 5 3 6v4H11l-1-4 2-6-3-4z" fill="#1b3a68" />
        <path d="M12 29q-8 0-6-9" fill="none" stroke="#1b3a68" strokeWidth="2" />
        <circle cx="13" cy="12" r="1" fill="#cfe0f4" /><circle cx="18" cy="12" r="1" fill="#cfe0f4" />
      </>
    ),
  },
  {
    name: 'WeChat',
    state: 'active',
    icon: (
      <>
        <ellipse cx="11" cy="12" rx="11" ry="9.500" fill="#22cc64" /><path d="m4 18-1 5 6-3z" fill="#22cc64" />
        <circle cx="7.500" cy="9" r="1.500" fill="#0f6c35" /><circle cx="14.500" cy="9" r="1.500" fill="#0f6c35" />
        <ellipse cx="21" cy="19" rx="9" ry="8" fill="#e9e9e9" /><path d="m25 25 3 3-1-5z" fill="#e9e9e9" />
        <circle cx="18" cy="17" r="1.200" fill="#777" /><circle cx="24" cy="17" r="1.200" fill="#777" />
      </>
    ),
  },
  { name: 'JProfiler', state: 'open', icon: <GaugeIcon size={30} /> },
];

function Taskbar() {
  return (
    <div className="h-[59px] pb-0.5 bg-[#1c1c1c] flex items-center text-white">
      <button className="w-[461px] pl-6 flex items-center gap-2 text-left" aria-label="Weather">
        <Svg size={36} className="-mr-1">
          <circle cx="16" cy="20" r="13" fill="#f08c1c" />
          <path d="M4 18a4 4 0 0 1 0-8 6 6 0 0 1 11 0 4 4 0 0 1 1 8zM16 34a4 4 0 0 1 0-8 6 6 0 0 1 11 0 4 4 0 0 1 1 8z" fill="#a9c9f8" />
          <circle cx="25" cy="10" r="10" fill="#fe8f9a" />
          <text x="25" y="15" fontSize="14" textAnchor="middle" fill="#1c1c1c">1</text>
        </Svg>
        <span className="flex flex-col text-[15px] leading-5 pb-0.5">
          <span>29°C</span>
          <span className="text-[#d5d5d5]">局部晴朗</span>
        </span>
      </button>
      <button className="w-[57px] mr-[3px] flex justify-center" aria-label="Start">
        <Svg size={30}>
          <defs>
            <linearGradient id="win" x1="0" y1="0" x2="1" y2="1">
              <stop offset="0" stopColor="#8fe3ff" /><stop offset="1" stopColor="#0f9bff" />
            </linearGradient>
          </defs>
          <path d="M1 0h13.500v14.500H0V1zM15.500 0H29l1 1v13.500H15.500zM0 15.500h14.500V30H1l-1-1zM15.500 15.500H30V29l-1 1H15.500z" fill="url(#win)" />
        </Svg>
      </button>
      <label className="w-[275px] h-10 rounded-full bg-[#3a3a3a] border border-[#4b4b4b] flex items-center pl-[14px] pr-2.5">
        <Svg size={20}>
          <circle cx="8" cy="8" r="6.500" fill="#555" stroke="#ececec" strokeWidth="2" />
          <path d="m13 13 5 6" stroke="#ececec" strokeWidth="2.500" />
        </Svg>
        <input aria-label="搜索" placeholder="搜索" className="grow w-0 ml-2.5 bg-transparent outline-none text-lg placeholder:text-[#cfcfcf]" />
        <Svg size={50} box="0 0 50 32" className="h-8">
          <ellipse cx="25" cy="28.500" rx="25" ry="3" fill="#c48059" />
          <path d="M14 16q0-12 12-13 9 1 13 17-10-5-15-1-7 0-10-3z" fill="#7764a8" />
          <path d="M24 5q-6 5-5 12M29 5q0 7-2 13M33 7q3 5 2 10" fill="none" stroke="#5377bd" strokeWidth="1.500" />
          <path d="M12 6q-1 6 5 10" fill="none" stroke="#b45494" strokeWidth="2.500" />
          <circle cx="12" cy="6" r="4" fill="#1f9cc2" /><path d="m6 1 5 0-1 8-3-1z" fill="#d07a4c" />
          <path d="m25 18-3 9M28 18l-1 9" stroke="#e2b21c" strokeWidth="2" />
        </Svg>
      </label>
      <div className="flex gap-[5px] ml-[5px]">
        {apps.map(({ name, icon, state }) => (
          <button
            key={name}
            aria-label={name}
            className={`w-[50px] h-[50px] rounded flex flex-col items-center pt-[9px] border ${
              state === 'active' ? 'bg-[#2b2b2b] border-[#353535]' : 'border-transparent'
            }`}
          >
            <Svg size={30}>{icon}</Svg>
            {state && (
              <span className={`mt-[5px] h-1 rounded-full ${state === 'active' ? 'w-5 bg-[#f47f66]' : 'w-2 bg-[#9a9a9a]'}`} />
            )}
          </button>
        ))}
      </div>
      <div className="ml-auto flex items-center pr-[26px]">
        <Svg size={14} className="mr-[22px]"><path d="m1 10 6-6 6 6" fill="none" stroke="#fff" strokeWidth="2" /></Svg>
        <Svg size={22} className="mr-[18px]">
          <path d="M5 16a5 5 0 0 1 0-9 7 7 0 0 1 12 2l4 3z" fill="#999" />
          <path d="M5 18a4 4 0 0 1 0-7q4-1 7 2 7-5 9 2-.5 3-3 3z" fill="#f4f4f4" />
        </Svg>
        <span className="mr-[21px] text-[19px] leading-6">英</span>
        <Svg size={20} className="mr-[9px]">
          <path d="M1 8a13 13 0 0 1 18 0M4 11.500a9 9 0 0 1 12 0M7 14.500a4.500 4.500 0 0 1 6 0" fill="none" stroke="#fff" strokeWidth="1.700" />
          <circle cx="10" cy="17" r="1.600" fill="#fff" />
        </Svg>
        <Svg size={20} className="mr-[11px]">
          <path d="M1 7.500h3.500l5-4.500v14l-5-4.500H1zM13 7.500l6 6M19 7.500l-6 6" fill="none" stroke="#fff" strokeWidth="1.500" />
        </Svg>
        <Svg size={20} className="mr-[19px]">
          <path d="M9 5h8v11H8M19 8v5" fill="none" stroke="#fff" strokeWidth="1.800" />
          <path d="M6 1q5 5 3 11-2 4-7 3-2-2-1-7 1-4 5-7z" fill="#fff" />
          <path d="M11 13V9l4-1v5z" fill="#fff" />
        </Svg>
        <span className="flex flex-col text-right text-[15px] leading-5 pb-0.5">
          <span>10:22</span>
          <span>2024/9/26</span>
        </span>
        <Svg size={18} className="ml-2.5">
          <path d="M9 0q6 0 6 7v5l2 3H1l2-3V7q0-7 6-7zM6.500 16h5q-2.500 3-5 0z" fill="#fa9e86" />
        </Svg>
      </div>
    </div>
  );
}

function FloatingBadge() {
  return (
    <div className="absolute right-20 top-[171px] w-[60px] h-[60px] rounded-full p-[5px] bg-[conic-gradient(#79cbe0,#b9abe8_15%,#e6a3d8_30%,#f0a3cc_45%,#e0a2dc_55%,#a9b0ea_66%,#7cc8e0_78%,#86d0dc_90%,#79cbe0)]">
      <div className="w-full h-full rounded-full bg-[#808384] flex items-center justify-center">
        <Svg size={40}>
          <g fill="none" stroke="#000" strokeWidth="5" strokeLinecap="round" strokeLinejoin="round">
            <path d="m8 8 7 3" />
            <path d="m19 13 12-6" />
            <path d="m4 15 11 7v2" />
            <path d="m30 20 6-5" />
            <path d="m15 28 1 7" />
            <path d="M25 22v13" />
          </g>
        </Svg>
      </div>
    </div>
  );
}

export default function App() {
  return (
    <div className="relative min-h-screen flex flex-col bg-[#3c3f41] text-[#bbbbbb] text-base leading-5 font-['Noto_Sans','Noto_Sans_CJK_SC',sans-serif]">
      <header className="h-[29px] bg-[#f2f2f2] text-[#8a8a8a] flex items-center pl-1 pr-0.5">
        <GaugeIcon size={16} />
        <h1 className="ml-2 text-sm grow">Springmain - JProfiler 11.0.2</h1>
        <button aria-label="Minimize" className="w-[58px] flex justify-center">
          <Svg size={13}><path d="M0 6.500h13" stroke="#8c8c8c" /></Svg>
        </button>
        <button aria-label="Restore" className="w-[58px] flex justify-center">
          <Svg size={13}>
            <rect x=".5" y="3" width="9.500" height="9.500" rx="1.500" fill="none" stroke="#8c8c8c" />
            <path d="M3 .5h7q2.500 0 2.500 2.500v7" fill="none" stroke="#8c8c8c" />
          </Svg>
        </button>
        <button aria-label="Close" className="w-[61px] flex justify-center">
          <Svg size={13}><path d="m.5.5 12 12M12.500.5l-12 12" stroke="#777" /></Svg>
        </button>
      </header>
      <nav className="h-[26px] flex items-center gap-[15px] pl-[7px]">
        {['Session', 'View', 'Profiling', 'Window', 'Help'].map((menu) => (
          <button key={menu}>
            <span className="underline underline-offset-4">{menu[0]}</span>{menu.slice(1)}
          </button>
        ))}
      </nav>
      <Toolbar />
      <div className="grow flex">
        <Sidebar />
        <Telemetries />
      </div>
      <StatusBar />
      <Taskbar />
      <FloatingBadge />
    </div>
  );
}
